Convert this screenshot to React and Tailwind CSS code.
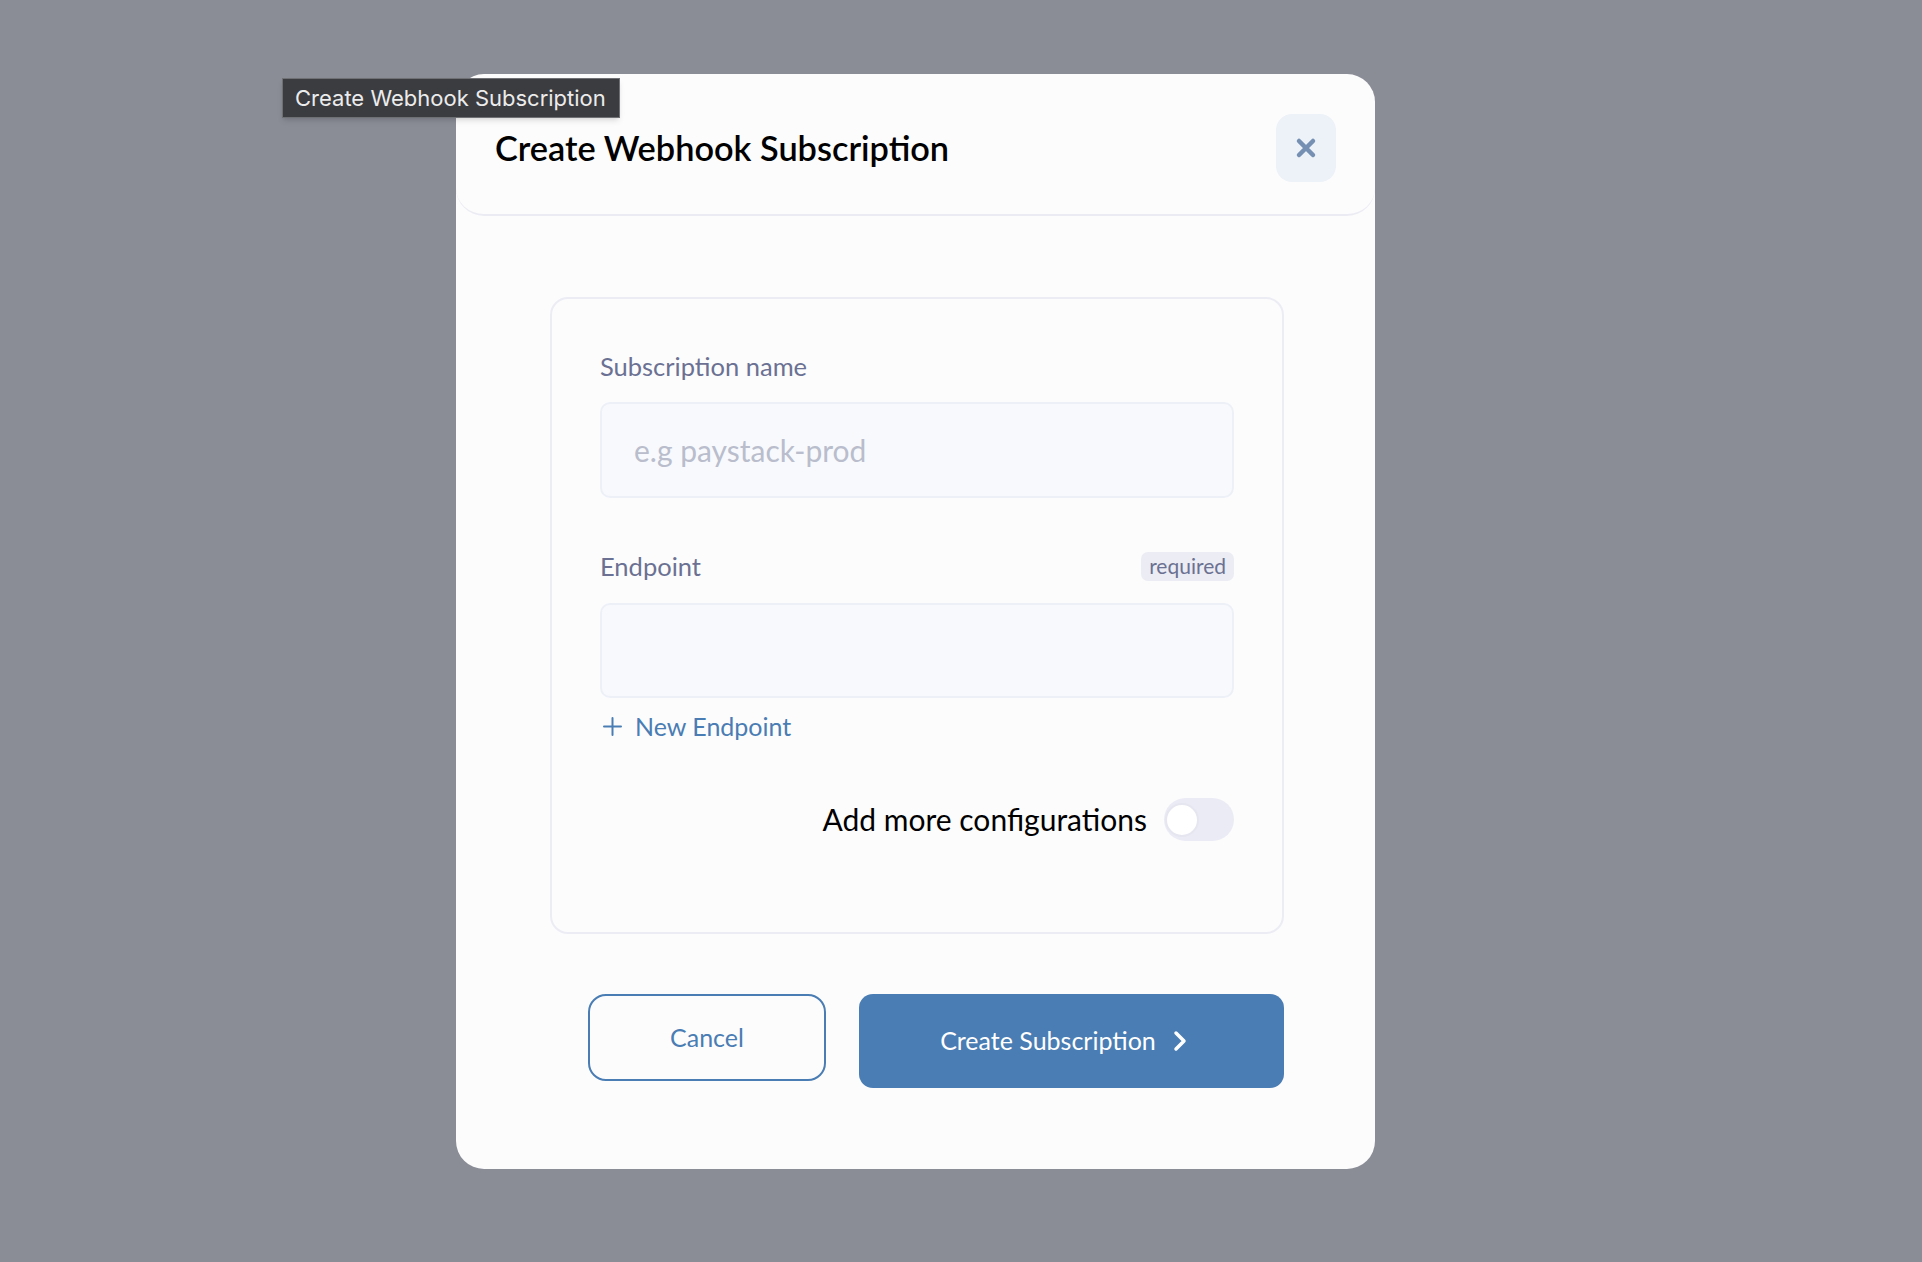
import React, { useState } from "react";

const font = { fontFamily: "Lato, 'Noto Sans', sans-serif" };

const CloseIcon = () => (
  <svg width="22" height="22" viewBox="0 0 22 22" fill="none">
    <path d="M4 4L18 18M18 4L4 18" stroke="#7690b3" strokeWidth="4.5" strokeLinecap="round" />
  </svg>
);

const PlusIcon = () => (
  <svg width="21" height="21" viewBox="0 0 21 21" fill="none">
    <path d="M10.5 2v17M2 10.5h17" stroke="#4a7db3" strokeWidth="2" strokeLinecap="round" />
  </svg>
);

const ChevronIcon = () => (
  <svg width="14" height="22" viewBox="0 0 14 22" fill="none">
    <path d="M3 3l8 8-8 8" stroke="#ffffff" strokeWidth="3.5" strokeLinecap="round" strokeLinejoin="round" />
  </svg>
);

const App = () => {
  const [name, setName] = useState("");
  const [endpoint, setEndpoint] = useState("");
  const [moreConfig, setMoreConfig] = useState(false);

  return (
    <div className="relative min-h-screen w-full bg-[#8a8c96] pl-[456px] pt-[74px] pb-[94px]" style={font}>
      {/* native-looking tooltip */}
      <div
        className="absolute left-[282px] top-[78px] z-10 flex h-[40px] w-[338px] items-center border border-[#6f7074] bg-[#3b3c40] pl-[12px] text-[22px] text-[#ececec] shadow-md"
        style={{ fontFamily: "Inter, 'Noto Sans', sans-serif" }}
      >
        Create Webhook Subscription
      </div>

      {/* modal */}
      <div className="flex w-[919px] flex-col rounded-[28px] bg-[#fcfcfd] pb-[81px]">
        <div className="flex h-[142px] items-center justify-between rounded-[28px] border-b-2 border-[#ebebf3] px-[39px] pt-[8px]">
          <h1 className="text-[34.3px] font-semibold text-black">Create Webhook Subscription</h1>
          <button className="flex h-[68px] w-[60px] items-center justify-center rounded-[16px] bg-[#edf2f8]">
            <CloseIcon />
          </button>
        </div>

        <div className="ml-[94px] mt-[81px] flex w-[734px] flex-col rounded-[18px] border-2 border-[#ececf4] px-[48px] pt-[52px] pb-[90px]">
          <label className="text-[25.5px] leading-[30px] text-[#6b7192]">Subscription name</label>
          <input
            value={name}
            onChange={(e) => setName(e.target.value)}
            placeholder="e.g paystack-prod"
            className="mt-[21px] h-[96px] w-full rounded-[10px] border-2 border-[#edf1f7] bg-[#f7f9fc] px-[32px] text-[30px] text-[#333] outline-none placeholder:text-[#b9bdcc]"
            style={font}
          />

          <div className="mt-[53px] flex items-center justify-between">
            <span className="text-[25.5px] leading-[30px] text-[#6b7192]">Endpoint</span>
            <span className="flex h-[29px] items-center rounded-[7px] bg-[#ececf4] px-[8px] text-[21px] text-[#6b7192]">
              required
            </span>
          </div>
          <input
            value={endpoint}
            onChange={(e) => setEndpoint(e.target.value)}
            className="mt-[22px] h-[95px] w-full rounded-[10px] border-2 border-[#edf1f7] bg-[#f7f9fc] px-[32px] text-[30px] text-[#333] outline-none"
            style={font}
          />

          <button className="mt-[13px] flex items-center gap-[12px] self-start pl-[2px] text-[25px] leading-[30px] text-[#4a7db3]">
            <PlusIcon />
            New Endpoint
          </button>

          <div className="mt-[56px] flex items-center justify-end gap-[17px]">
            <span className="text-[30px] text-black">Add more configurations</span>
            <button
              onClick={() => setMoreConfig(!moreConfig)}
              className="flex h-[43px] w-[70px] items-center rounded-full bg-[#ebebf5] px-[1px]"
            >
              <span className="h-[34px] w-[34px] rounded-full border-2 border-[#e6e6f0] bg-white" />
            </button>
          </div>
        </div>

        <div className="ml-[132px] mt-[60px] flex items-start gap-[33px]">
          <button className="flex h-[87px] w-[238px] items-center justify-center rounded-[18px] border-2 border-[#4a7db3] text-[25px] text-[#4a7db3]">
            Cancel
          </button>
          <button className="flex h-[94px] w-[425px] items-center justify-center gap-[17px] rounded-[14px] bg-[#4a7db3] pr-[16px] text-[25px] text-white">
            Create Subscription
            <ChevronIcon />
          </button>
        </div>
      </div>
    </div>
  );
};

export default App;
